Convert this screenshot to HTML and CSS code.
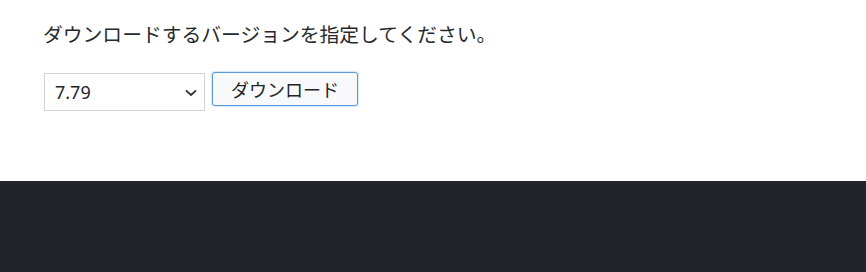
FILE: index.html
```html
<!DOCTYPE html>
<html lang="ja">
<head>
<meta charset="utf-8">
<title>ダウンロード</title>
<link rel="stylesheet" href="styles.css">
</head>
<body>
<main class="content">
  <p class="lead">ダウンロードするバージョンを指定してください。</p>
  <form class="download-form">
    <div class="select-wrap">
      <select class="version-select">
        <option>7.79</option>
      </select>
      <svg class="chevron" width="12" height="8" viewBox="0 0 12 8"><path d="M1.5 1.8 L6 6 L10.5 1.8" fill="none" stroke="#333" stroke-width="1.8" stroke-linecap="round" stroke-linejoin="round"/></svg>
    </div>
    <button type="button" class="download-btn">ダウンロード</button>
  </form>
</main>
<footer class="site-footer"></footer>
</body>
</html>
```
FILE: styles.css
```css
html, body {
  margin: 0;
  padding: 0;
  background: #fff;
}
body {
  font-family: "Noto Sans", "Noto Sans CJK JP", sans-serif;
  color: #212529;
  height: 272px;
  display: flex;
  flex-direction: column;
}
.content {
  height: 181px;
  box-sizing: border-box;
  padding: 20px 0 0 43px;
}
.lead {
  margin: 0;
  font-size: 19.8px;
  line-height: 30px;
  color: #262a2e;
}
.download-form {
  display: flex;
  align-items: flex-start;
  gap: 7px;
  margin-top: 22px;
  padding-left: 1px;
}
.select-wrap {
  position: relative;
  margin-top: 1px;
}
.version-select {
  appearance: none;
  -webkit-appearance: none;
  width: 161px;
  height: 38px;
  box-sizing: border-box;
  border: 1px solid #d3d3d3;
  border-radius: 0;
  background: #fff;
  padding: 0 30px 0 10px;
  font-family: "Noto Sans", "Noto Sans CJK JP", sans-serif;
  font-size: 18px;
  color: #212529;
  outline: none;
}
.chevron {
  position: absolute;
  right: 8px;
  top: 16px;
  pointer-events: none;
}
.download-btn {
  width: 146px;
  height: 34px;
  box-sizing: border-box;
  border: 1px solid #5a9ad9;
  border-radius: 3px;
  background: #f8f9fa;
  box-shadow: 0 0 1px 1px rgba(90, 154, 217, 0.25);
  font-family: "Noto Sans CJK JP", "Noto Sans", sans-serif;
  font-size: 18px;
  color: #212529;
  padding: 0;
  line-height: 1;
}
.site-footer {
  flex: 1;
  background: #212529;
}
```
